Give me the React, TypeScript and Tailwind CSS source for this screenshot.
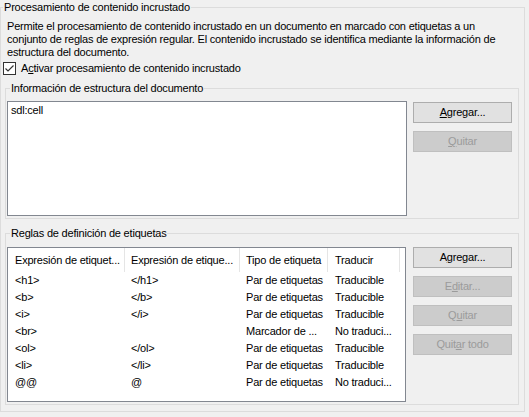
import React from "react";

const rules = [
  { open: "<h1>", close: "</h1>", type: "Par de etiquetas", tr: "Traducible" },
  { open: "<b>", close: "</b>", type: "Par de etiquetas", tr: "Traducible" },
  { open: "<i>", close: "</i>", type: "Par de etiquetas", tr: "Traducible" },
  { open: "<br>", close: "", type: "Marcador de ...", tr: "No traduci..." },
  { open: "<ol>", close: "</ol>", type: "Par de etiquetas", tr: "Traducible" },
  { open: "<li>", close: "</li>", type: "Par de etiquetas", tr: "Traducible" },
  { open: "@@", close: "@", type: "Par de etiquetas", tr: "No traduci..." },
];

function Button({ label, u, disabled }: { label: string; u: number; disabled?: boolean }) {
  return (
    <div
      className={
        "w-[99px] h-[21px] flex items-center justify-center border " +
        (disabled ? "bg-[#cccccc] border-[#bfbfbf] text-[#9b9b9b]" : "bg-[#e1e1e1] border-[#adadad] text-black")
      }
    >
      <span>
        {label.slice(0, u)}
        <span className="underline underline-offset-[1px]">{label[u]}</span>
        {label.slice(u + 1)}
      </span>
    </div>
  );
}

export default function App() {
  return (
    <div className="w-[529px] h-[417px] bg-[#f0f0f0] text-[11px] leading-[13px] tracking-[-0.2px] text-black font-['Liberation_Sans',Arial,sans-serif] overflow-hidden pt-[1px] whitespace-nowrap">
      <fieldset className="w-[525px] border border-[#dcdcdc] px-[5px] pb-[6px]">
        <legend className="ml-[-3px] px-[1px]">Procesamiento de contenido incrustado</legend>
        <p className="mt-[6px] ml-[1px] w-[500px] whitespace-normal">
          Permite el procesamiento de contenido incrustado en un documento en marcado con etiquetas a un
          conjunto de reglas de expresión regular. El contenido incrustado se identifica mediante la información de
          estructura del documento.
        </p>
        <label className="flex items-center mt-[3px] ml-[-3px] h-[13px]">
          <span className="w-[13px] h-[13px] border border-[#333333] bg-white flex items-center justify-center">
            <svg width="11" height="11" viewBox="0 0 11 11">
              <path d="M1.5 5.5 L4 8 L9.5 2.5" fill="none" stroke="#333333" strokeWidth="1.2" />
            </svg>
          </span>
          <span className="ml-[5px]">
            A<span className="underline">c</span>tivar procesamiento de contenido incrustado
          </span>
        </label>

        <fieldset className="mt-[7px] ml-[-1px] w-[514px] border border-[#dcdcdc] pl-[1px] pr-[5px] pb-[2px]">
          <legend className="ml-[3px] px-[1px]">Información de estructura del documento</legend>
          <div className="flex gap-[6px] mt-[6px]">
            <div className="w-[400px] h-[115px] bg-white border border-[#828790] px-[3px] pt-[2px]">sdl:cell</div>
            <div className="flex flex-col gap-[8px] pt-[1px]">
              <Button label="Agregar..." u={0} />
              <Button label="Quitar" u={0} disabled />
            </div>
          </div>
        </fieldset>

        <fieldset className="mt-[8px] ml-[-1px] w-[514px] border border-[#dcdcdc] pl-[1px] pr-[5px] pb-[2px]">
          <legend className="ml-[3px] px-[1px]">Reglas de definición de etiquetas</legend>
          <div className="flex gap-[7px] mt-[7px]">
            <div className="w-[399px] h-[155px] bg-white border border-[#828790]">
              <div className="flex h-[24px] items-center">
                <div className="w-[117px] h-full pl-[7px] flex items-center border-r border-[#e5e5e5]">Expresión de etiquet...</div>
                <div className="w-[115px] h-full pl-[6px] flex items-center border-r border-[#e5e5e5]">Expresión de etique...</div>
                <div className="w-[88px] h-full pl-[6px] flex items-center border-r border-[#e5e5e5]">Tipo de etiqueta</div>
                <div className="w-[72px] h-full pl-[7px] flex items-center border-r border-[#e5e5e5]">Traducir</div>
              </div>
              {rules.map((r, i) => (
                <div key={i} className="flex h-[17px] items-center">
                  <div className="w-[117px] pl-[7px]">{r.open}</div>
                  <div className="w-[115px] pl-[6px]">{r.close}</div>
                  <div className="w-[88px] pl-[6px]">{r.type}</div>
                  <div className="w-[72px] pl-[7px]">{r.tr}</div>
                </div>
              ))}
            </div>
            <div className="flex flex-col gap-[8px]">
              <Button label="Agregar..." u={1} />
              <Button label="Editar..." u={1} disabled />
              <Button label="Quitar" u={1} disabled />
              <Button label="Quitar todo" u={4} disabled />
            </div>
          </div>
        </fieldset>
      </fieldset>
    </div>
  );
}
